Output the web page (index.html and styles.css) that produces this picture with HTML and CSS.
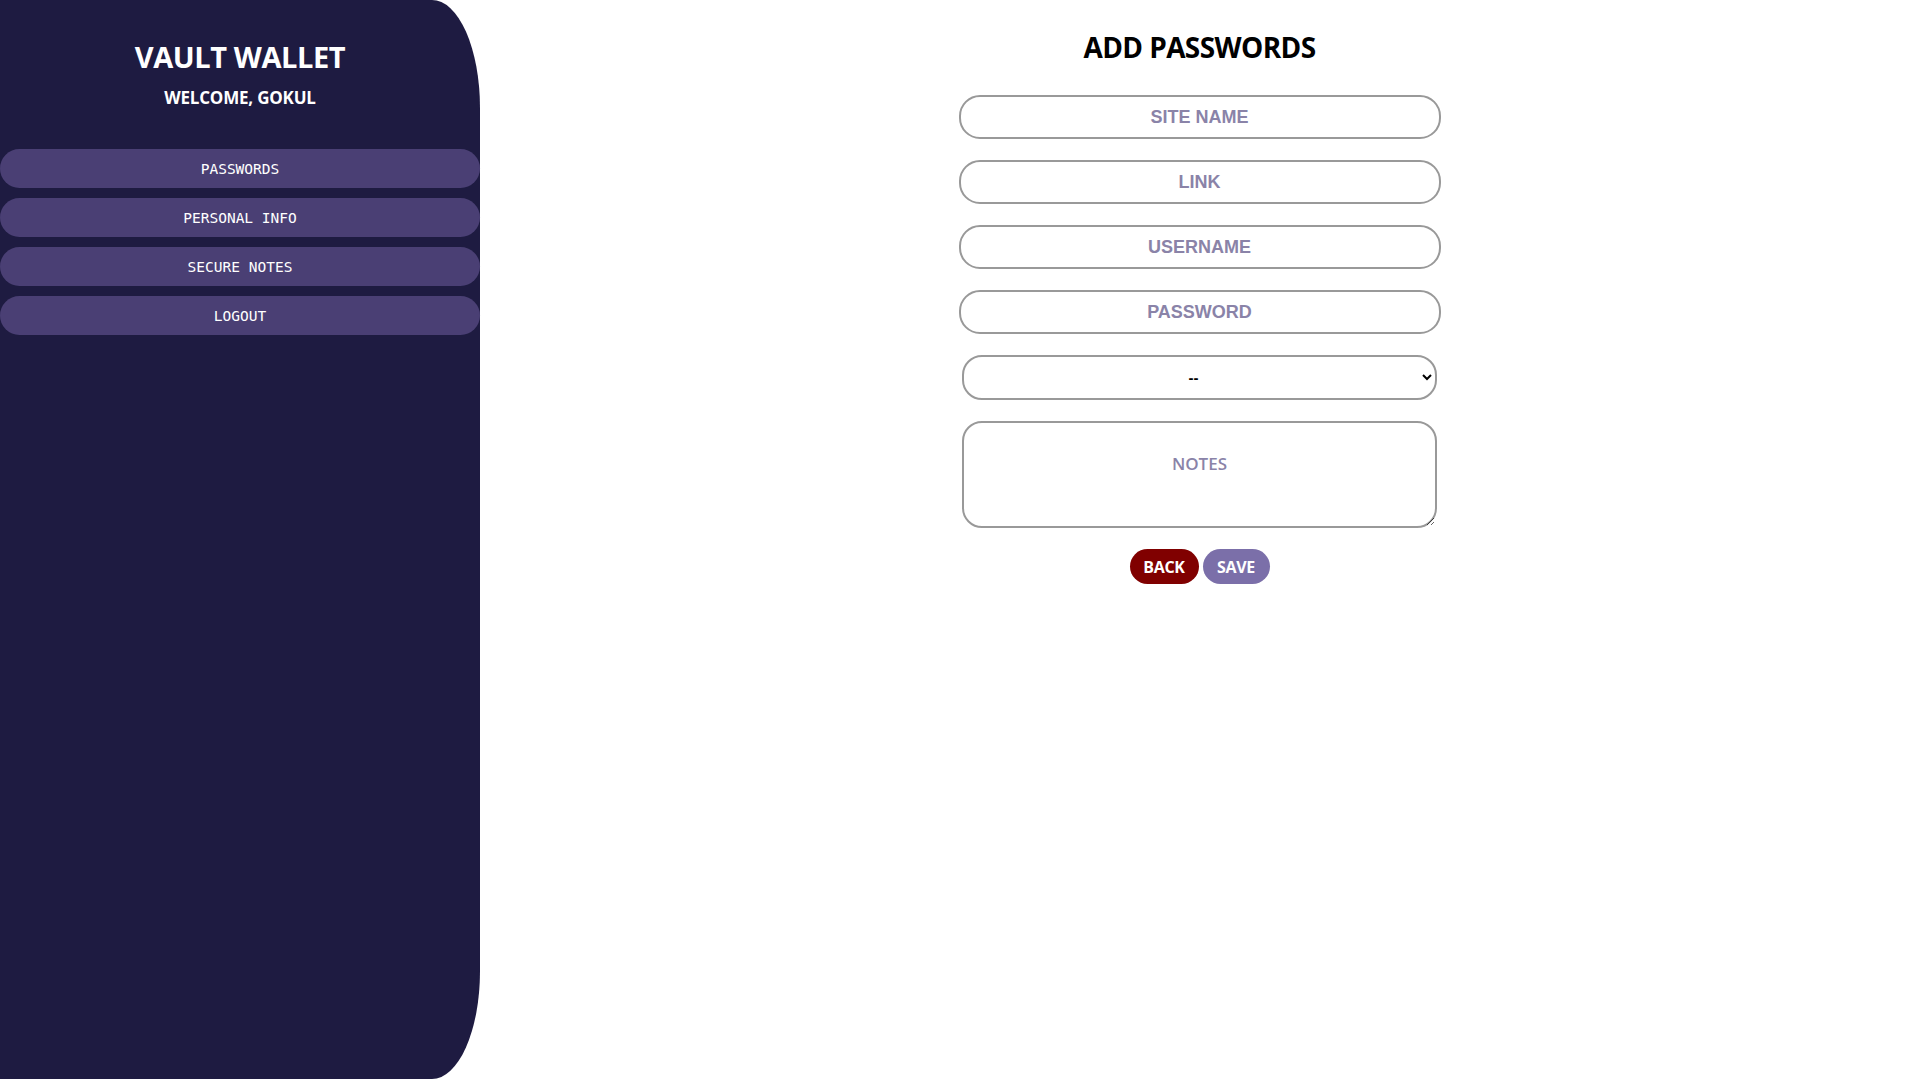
FILE: index.html
```html
<!DOCTYPE html>
<html lang="en">
<head>
<meta charset="utf-8">
<title>Vault Wallet - Add Passwords</title>
<link rel="stylesheet" href="styles.css">
</head>
<body>
<aside class="sidebar">
  <h1 class="brand">VAULT WALLET</h1>
  <p class="welcome">WELCOME, GOKUL</p>
  <nav class="nav">
    <a class="nav-btn" href="#">PASSWORDS</a>
    <a class="nav-btn" href="#">PERSONAL INFO</a>
    <a class="nav-btn" href="#">SECURE NOTES</a>
    <a class="nav-btn" href="#">LOGOUT</a>
  </nav>
</aside>
<main class="main">
  <h2 class="page-title">ADD PASSWORDS</h2>
  <form class="form">
    <input class="field" type="text" placeholder="SITE NAME">
    <input class="field" type="text" placeholder="LINK">
    <input class="field" type="text" placeholder="USERNAME">
    <input class="field" type="password" placeholder="PASSWORD">
    <select class="select">
      <option>--</option>
    </select>
    <textarea class="notes" placeholder="NOTES"></textarea>
    <div class="actions">
      <button type="button" class="btn btn-back">BACK</button>
      <button type="button" class="btn btn-save">SAVE</button>
    </div>
  </form>
</main>
</body>
</html>
```

FILE: styles.css
```css
html, body {
  margin: 0;
  padding: 0;
  height: 100%;
  background: #ffffff;
}

body {
  display: flex;
  font-family: "Open Sans", "Noto Sans", sans-serif;
}

.sidebar {
  width: 480px;
  flex: 0 0 480px;
  height: 100vh;
  background: #1e1b41;
  border-radius: 0 10% 10% 0;
  padding-top: 39px;
  box-sizing: border-box;
  text-align: center;
  color: #ffffff;
}

.brand {
  margin: 0;
  font-size: 29px;
  line-height: 36px;
  font-weight: 700;
  letter-spacing: -0.4px;
}

.welcome {
  margin: 11px 0 0;
  font-size: 17px;
  line-height: 24px;
  font-weight: 700;
  letter-spacing: -0.2px;
}

.nav {
  margin-top: 39px;
  display: flex;
  flex-direction: column;
  gap: 10px;
}

.nav-btn {
  display: flex;
  align-items: center;
  justify-content: center;
  height: 39px;
  border-radius: 20px;
  background: #4a3f74;
  color: #ffffff;
  text-decoration: none;
  font-family: "DejaVu Sans Mono", "Liberation Mono", monospace;
  font-size: 14.5px;
}

.main {
  flex: 1;
  text-align: center;
}

.page-title {
  margin: 29px 0 0;
  font-size: 28px;
  line-height: 36px;
  font-weight: 700;
  color: #000000;
  letter-spacing: -0.6px;
}

.form {
  margin-top: 30px;
  display: flex;
  flex-direction: column;
  align-items: center;
}

.field {
  width: 482px;
  height: 44px;
  box-sizing: border-box;
  border: 2px solid #999999;
  border-radius: 21px;
  margin-bottom: 21px;
  text-align: center;
  font-family: "Liberation Sans", Arial, sans-serif;
  font-weight: 700;
  font-size: 18px;
  color: #333333;
  background: #ffffff;
  outline: none;
}

.field::placeholder {
  color: #8a83a8;
  opacity: 1;
}

.select {
  width: 475px;
  height: 45px;
  box-sizing: border-box;
  border: 2px solid #999999;
  border-radius: 20px;
  margin-bottom: 21px;
  text-align: center;
  text-align-last: center;
  font-family: "Liberation Sans", Arial, sans-serif;
  font-size: 15px;
  font-weight: 700;
  background: #ffffff;
  color: #000000;
}

.notes {
  width: 475px;
  height: 107px;
  box-sizing: border-box;
  border: 2px solid #999999;
  border-radius: 20px;
  margin: 0 0 21px;
  padding: 30px 10px 0;
  text-align: center;
  font-family: "Open Sans", "Noto Sans", sans-serif;
  font-weight: 600;
  font-size: 17px;
  line-height: 22px;
  resize: vertical;
  outline: none;
}

.notes::placeholder {
  color: #8a83a8;
  opacity: 1;
}

.actions {
  display: flex;
  justify-content: center;
  gap: 4px;
}

.btn {
  height: 35px;
  border: none;
  border-radius: 18px;
  color: #ffffff;
  font-family: "Open Sans", "Noto Sans", sans-serif;
  font-weight: 700;
  font-size: 16px;
  letter-spacing: -0.3px;
  padding: 0;
  cursor: pointer;
}

.btn-back {
  width: 69px;
  background: #800000;
}

.btn-save {
  width: 67px;
  background: #7b6fa9;
}
```
